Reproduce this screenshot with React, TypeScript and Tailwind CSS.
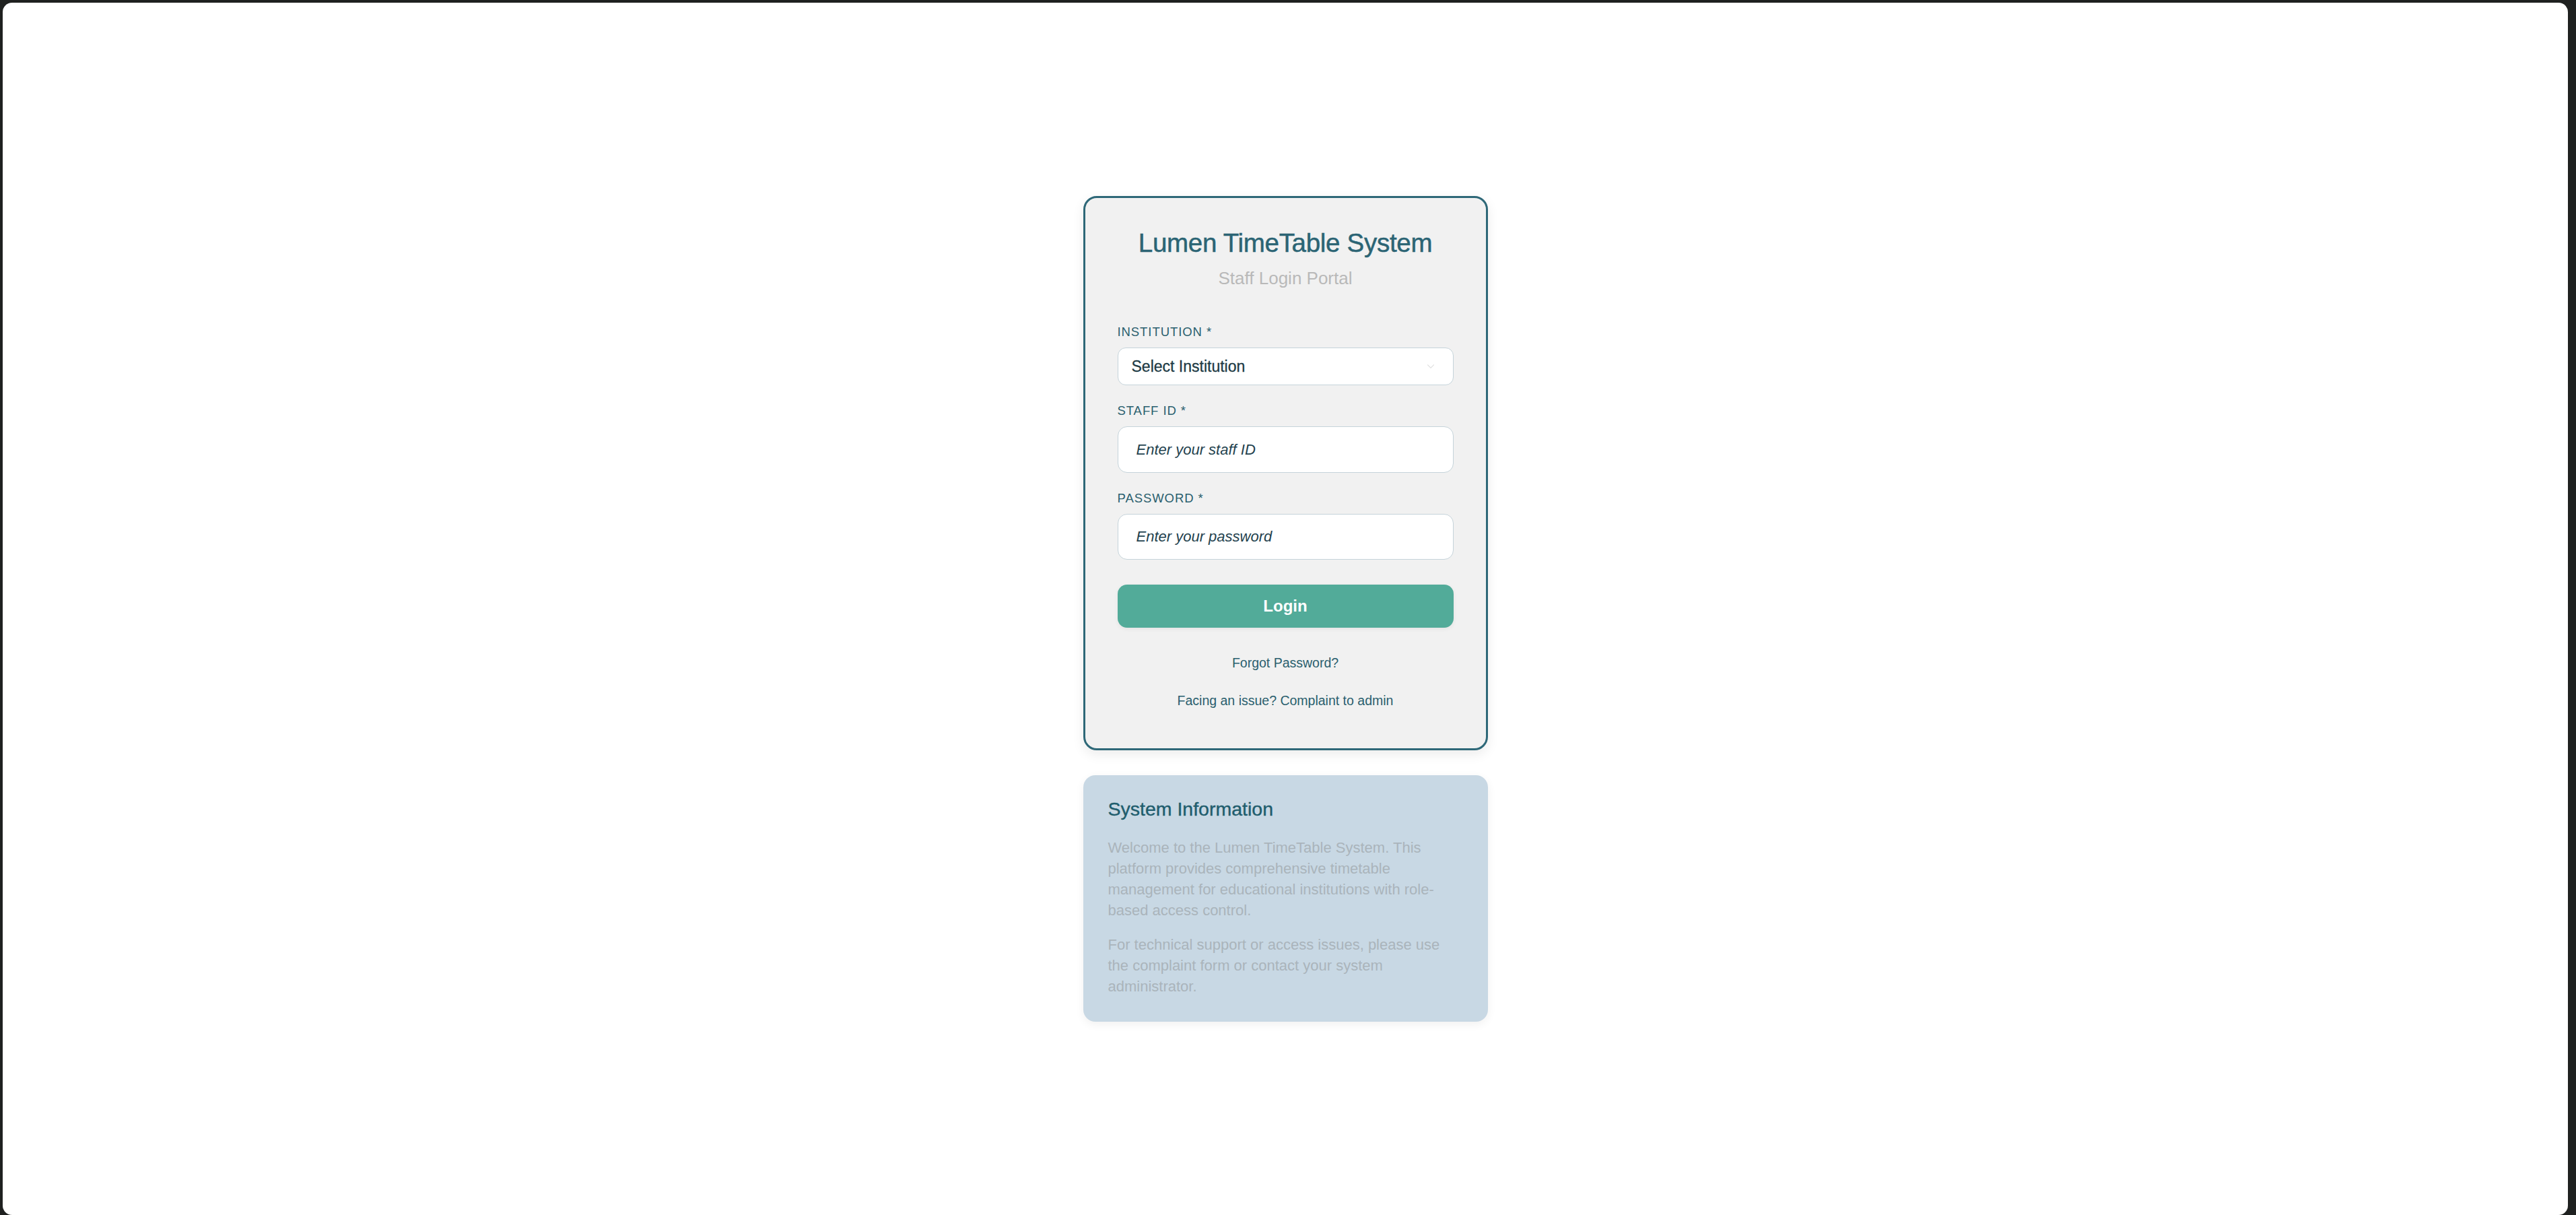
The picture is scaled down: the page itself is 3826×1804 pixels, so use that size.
import { ChevronDown } from "lucide-react";

const font = { fontFamily: '"Liberation Sans", Arial, sans-serif' };

function Field({ label, children }: { label: string; children: React.ReactNode }) {
  return (
    <div className="flex flex-col gap-[11px]">
      <label className="text-[18.5px] leading-[24px] tracking-wider text-[#2a5f6e] uppercase">{label} *</label>
      {children}
    </div>
  );
}

export default function App() {
  return (
    <div className="w-full h-screen bg-[#1f2120] pt-[4px] pl-[4px] pr-[12px]" style={font}>
      <div className="h-[1800px] bg-white rounded-[14px] flex flex-col items-center justify-center">
        <div className="w-[601px] flex flex-col gap-[37px]">
          {/* login card */}
          <div className="bg-[#f1f1f1] border-[3px] border-[#2e6878] rounded-[20px] shadow-[0_6px_18px_rgba(0,0,0,0.08)] px-[48px] pt-[45px] pb-[59px]">
            <h1 className="text-center text-[38.5px] leading-[44px] text-[#2b6474] tracking-[-0.3px] [-webkit-text-stroke:0.5px_#2b6474]">
              Lumen TimeTable System
            </h1>
            <p className="mt-[14px] text-center text-[26px] leading-[32px] text-[#b9b9b9]">Staff Login Portal</p>

            <div className="mt-[52px] flex flex-col gap-[26px]">
              <Field label="Institution">
                <div className="relative">
                  <select
                    defaultValue=""
                    className="appearance-none w-full h-[56px] bg-white border border-[#c5d3da] rounded-[12px] pl-[20px] pr-[48px] text-[23px] text-[#1d3a44] outline-none [-webkit-text-stroke:0.3px_#1d3a44]"
                    style={font}
                  >
                    <option value="">Select Institution</option>
                  </select>
                  <ChevronDown
                    size={18}
                    strokeWidth={1.5}
                    className="absolute right-[25px] top-1/2 -translate-y-1/2 text-[#e2e2e2] pointer-events-none"
                  />
                </div>
              </Field>

              <Field label="Staff ID">
                <input
                  type="text"
                  placeholder="Enter your staff ID"
                  className="w-full h-[69px] bg-white border border-[#c5d3da] rounded-[14px] px-[27px] text-[22px] text-[#1d3a44] outline-none placeholder:italic placeholder:text-[#23424e]"
                  style={font}
                />
              </Field>

              <Field label="Password">
                <input
                  type="password"
                  placeholder="Enter your password"
                  className="w-full h-[68px] bg-white border border-[#c5d3da] rounded-[14px] px-[27px] text-[22px] text-[#1d3a44] outline-none placeholder:italic placeholder:text-[#23424e]"
                  style={font}
                />
              </Field>
            </div>

            <button
              className="mt-[37px] w-full h-[64px] rounded-[14px] bg-[#52ab99] text-white text-[24px] font-bold shadow-[0_2px_6px_rgba(0,0,0,0.06)]"
              style={font}
            >
              Login
            </button>

            <div className="mt-[40px] flex flex-col items-center gap-[32px] text-[19.5px] leading-[24px] text-[#2a5f6e]">
              <a href="#">Forgot Password?</a>
              <a href="#">Facing an issue? Complaint to admin</a>
            </div>
          </div>

          {/* info box */}
          <div className="bg-[#c8d8e4] rounded-[18px] shadow-[0_4px_14px_rgba(0,0,0,0.06)] px-[37px] pt-[33px] pb-[37px]">
            <h2 className="text-[28.5px] leading-[34px] text-[#1f5d6d] [-webkit-text-stroke:0.4px_#1f5d6d]">System Information</h2>
            <p className="mt-[25px] text-[22px] leading-[31px] text-[#aab4bb]">
              Welcome to the Lumen TimeTable System. This platform provides comprehensive timetable management for
              educational institutions with role-based access control.
            </p>
            <p className="mt-[20px] text-[22px] leading-[31px] text-[#aab4bb]">
              For technical support or access issues, please use the complaint form or contact your system
              administrator.
            </p>
          </div>
        </div>
      </div>
    </div>
  );
}
